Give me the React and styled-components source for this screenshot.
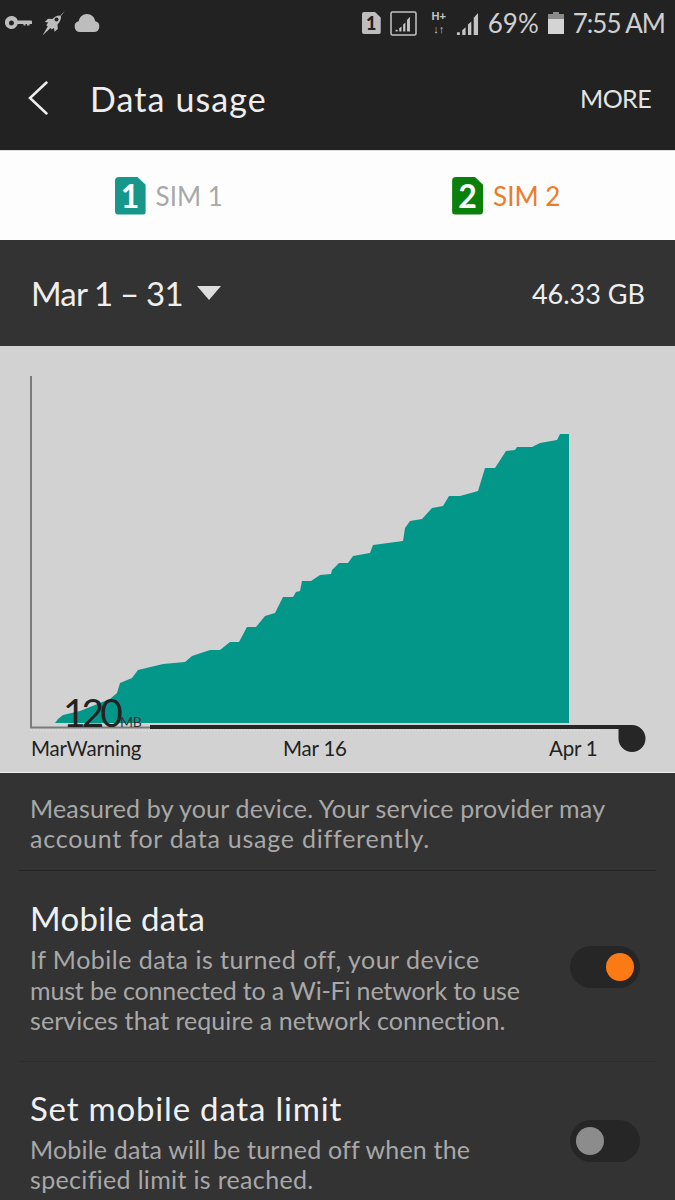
import React from "react";
import styled, { createGlobalStyle } from "styled-components";

const GlobalStyle = createGlobalStyle`
  html, body {
    margin: 0;
    background: #333;
  }
  * {
    box-sizing: border-box;
  }
`;

const Page = styled.div`
  width: 675px;
  height: 1200px;
  overflow: hidden;
  background: #333;
  font-family: Lato, "Open Sans", sans-serif;
`;

const TopBlock = styled.header`
  height: 151px;
  background: #222;
  border-bottom: 1px solid #ddd;
`;

const StatusBar = styled.div`
  height: 46px;
  display: flex;
  align-items: center;
  justify-content: space-between;
  padding: 0 10px 0 5px;
  color: #c4c4c4;
`;

const StatusGroup = styled.div`
  display: flex;
  align-items: center;
  gap: ${({ $gap }) => $gap}px;
`;

const StatusText = styled.span`
  font-size: 26px;
  letter-spacing: ${({ $spacing }) => $spacing || 0}px;
  color: #cfcfcf;
`;

const MiniSim = styled.div`
  width: 19px;
  height: 22px;
  display: flex;
  align-items: center;
  justify-content: center;
  background: #bdbdbd;
  color: #222;
  border-radius: 2px;
  font-size: 18px;
  font-weight: 900;
  clip-path: polygon(0 0, 70% 0, 100% 25%, 100% 100%, 0 100%);
`;

const NetType = styled.div`
  width: 16px;
  margin-left: 5px;
  display: flex;
  flex-direction: column;
  align-items: center;
  font-family: "Liberation Sans", sans-serif;
  font-size: 11px;
  font-weight: 700;
  line-height: 13px;
  color: #c4c4c4;
`;

const AppBar = styled.div`
  height: 104px;
  display: flex;
  align-items: center;
  padding: 0 24px 0 28px;
  color: #eee;
`;

const Title = styled.h1`
  margin: 0 0 0 42px;
  flex: 1;
  font-size: 34px;
  font-weight: 400;
  letter-spacing: 1.1px;
`;

const MoreButton = styled.span`
  font-size: 25px;
  letter-spacing: -0.6px;
  color: #e4e4e4;
`;

const SimTabs = styled.nav`
  height: 89px;
  display: grid;
  grid-template-columns: 1fr 1fr;
  background: #fdfdfd;
`;

const SimTab = styled.div`
  display: flex;
  align-items: center;
  justify-content: center;
  gap: 10px;
  font-size: 26px;
  color: ${({ $active }) => ($active ? "#ee7b28" : "#a9a9a9")};
`;

const SimBadge = styled.div`
  width: 31px;
  height: 38px;
  display: flex;
  align-items: center;
  justify-content: center;
  background: ${({ $color }) => $color};
  color: #fff;
  border-radius: 4px;
  font-size: 32px;
  font-weight: 700;
  clip-path: polygon(0 0, 72% 0, 100% 22%, 100% 100%, 0 100%);
`;

const Summary = styled.div`
  height: 106px;
  display: flex;
  align-items: center;
  justify-content: space-between;
  padding: 0 30px 0 31px;
  color: #eee;
`;

const PeriodPicker = styled.div`
  display: flex;
  align-items: center;
  gap: 14px;
  font-size: 33px;
  letter-spacing: -0.8px;
`;

const Caret = styled.span`
  width: 0;
  height: 0;
  border-left: 12px solid transparent;
  border-right: 12px solid transparent;
  border-top: 14px solid #ddd;
`;

const Total = styled.span`
  font-size: 27px;
`;

const ChartPanel = styled.section`
  position: relative;
  height: 427px;
  padding-top: 388px;
  background: #d2d2d2;
  border-bottom: 1px solid #eee;
`;

const ChartDrawing = styled.svg`
  position: absolute;
  top: 0;
  left: 0;
  display: block;
`;

const WarningValue = styled.div`
  position: absolute;
  left: 63px;
  top: 343px;
  display: flex;
  align-items: baseline;
  gap: 1px;
  color: #222;
  font-size: 39px;
  letter-spacing: -4px;
  line-height: 46px;
`;

const WarningUnit = styled.span`
  font-size: 14px;
  letter-spacing: 0;
  color: #333;
`;

const AxisLabels = styled.div`
  position: relative;
  display: grid;
  grid-template-columns: 252px 266px auto;
  padding-left: 31px;
  color: #222;
  font-size: 20.5px;
  letter-spacing: -0.2px;
  line-height: 28px;
`;

const Note = styled.div`
  padding: 20px 19px 17px 30px;
  color: #a8a8a8;
  font-size: 25px;
  line-height: 30px;
`;

const Line = styled.span`
  display: block;
  white-space: nowrap;
  letter-spacing: ${({ $spacing }) => $spacing || 0}px;
`;

const Divider = styled.hr`
  margin: 0 19px;
  border: 0;
  border-top: 1px ${({ $dotted }) => ($dotted ? "dotted" : "solid")} #262626;
`;

const SettingRow = styled.div`
  display: flex;
  align-items: center;
  justify-content: space-between;
  padding: ${({ $top }) => $top}px 35px 25px 30px;
`;

const SettingTitle = styled.div`
  color: #f0f0f0;
  font-size: 33px;
  line-height: 40px;
  letter-spacing: ${({ $spacing }) => $spacing}px;
`;

const SettingText = styled.div`
  margin-top: 6px;
  color: #a8a8a8;
  font-size: 25px;
  line-height: 30.5px;
`;

const Toggle = styled.div`
  width: 70px;
  height: 42px;
  flex: none;
  display: flex;
  align-items: center;
  justify-content: ${({ $on }) => ($on ? "flex-end" : "flex-start")};
  padding: 0 6px;
  background: #262626;
  border-radius: 21px;
`;

const Knob = styled.span`
  width: 28px;
  height: 28px;
  border-radius: 50%;
  background: ${({ $on }) => ($on ? "#fb7a13" : "#8c8c8c")};
`;

const usagePoints =
  "55,723 58,719 63,715 80,711 100,703 110,699 117,693 120,683 132,678 138,670 163,664 185,662 192,656 210,650 " +
  "220,650 230,642 239,642 247,627 256,627 265,616 275,613 283,597 293,597 296,592 300,591 302,581 311,581 320,575 " +
  "331,574 332,570 339,563 348,563 353,556 370,553 373,545 403,541 405,528 410,521 422,519 432,508 443,506 449,496 " +
  "460,496 478,491 485,468 495,468 506,451 515,450 517,447 532,447 540,443 557,440 560,434 569,434 569,723";

const KeyIcon = () => (
  <svg width="27" height="14" viewBox="0 0 27 14" fill="#bdbdbd">
    <path d="M6.5 0a6.5 6.5 0 0 1 6.2 4.5H26a1 1 0 0 1 1 1V8h-2.5V9.500H22V8h-1.500V9.500H18.500V8h-5.800A6.500 6.500 0 1 1 6.500 0Zm0 4.500a2.200 2.200 0 1 0 0 5 2.200 2.200 0 0 0 0-5Z" />
  </svg>
);

const RocketIcon = () => (
  <svg width="26" height="26" viewBox="0 0 26 26" fill="#bdbdbd">
    <path d="M25 0.500 20.800 5.200c.8 3.500-.8 7-3.300 9.300l.3 4.500-3.300 2.800-.5-3.800-2.300 1.500-1.200-1.600-8 7.600 5.300-9.300-1.600-1 2-2.700-3.400-.6 3.200-3.200 4.300.4c2.300-2.600 5.800-4.300 9.200-3.500Z" />
    <circle cx="16.500" cy="9.500" r="2" fill="#222" />
  </svg>
);

const CloudIcon = () => (
  <svg width="26" height="18" viewBox="0 0 26 18" fill="#bdbdbd">
    <path d="M6 18a5.500 5.500 0 0 1-1.300-10.800C5.500 3 8.800 0 13 0s7.500 3 8.300 7.200A5.500 5.500 0 0 1 20 18Z" />
  </svg>
);

const SignalBars = ({ size, color }) => (
  <svg width={size} height={size} viewBox="0 0 24 24" fill={color}>
    <path d="M1 24h3v-3H1ZM6.500 24h3.500v-8l-3.500 3ZM12.500 24H16V10l-3.500 3ZM18.500 24H23V1l-4.500 5Z" />
  </svg>
);

const SignalBox = () => (
  <svg width="27" height="25" viewBox="0 0 27 25" fill="none">
    <rect x="1" y="1" width="25" height="23" rx="1.500" stroke="#c4c4c4" strokeWidth="1.500" />
    <g transform="translate(5 5) scale(.65)">
      <path fill="#c4c4c4" d="M1 24h3v-3H1ZM6.500 24h3.500v-8l-3.500 3ZM12.500 24H16V10l-3.500 3ZM18.500 24H23V1l-4.500 5Z" />
    </g>
  </svg>
);

const BatteryIcon = () => (
  <svg width="16" height="22" viewBox="0 0 16 22">
    <path fill="#8a8a8a" d="M5 0h6v2h5v6H0V2h5Z" />
    <rect y="7" width="16" height="15" fill="#d4d4d4" />
  </svg>
);

const BackIcon = () => (
  <svg width="20" height="34" viewBox="0 0 20 34" fill="none" stroke="#eee" strokeWidth="2.500" strokeLinecap="round">
    <path d="M18.500 1.500 2 17l16.500 15.500" />
  </svg>
);

const UsageChart = () => (
  <ChartDrawing width="675" height="427" viewBox="0 346 675 427">
    <polygon points={usagePoints} fill="#03978a" />
    <path d="M31 376V727.500H150" fill="none" stroke="#7b7b7b" strokeWidth="2" />
    <path d="M31 730.500H600" stroke="#e8e8e8" strokeWidth="1" strokeDasharray="1 2" />
    <path d="M150 725H632A13.500 13.500 0 1 1 618.500 738.500V729H150Z" fill="#262626" />
  </ChartDrawing>
);

export default function App() {
  return (
    <Page>
      <GlobalStyle />
      <TopBlock>
        <StatusBar>
          <StatusGroup $gap={8}>
            <KeyIcon />
            <RocketIcon />
            <CloudIcon />
          </StatusGroup>
          <StatusGroup $gap={9}>
            <MiniSim>1</MiniSim>
            <SignalBox />
            <NetType>
              <span>H+</span>
              <span>↓↑</span>
            </NetType>
            <SignalBars size={23} color="#c4c4c4" />
            <StatusText>69%</StatusText>
            <BatteryIcon />
            <StatusText $spacing={-1}>7:55 AM</StatusText>
          </StatusGroup>
        </StatusBar>
        <AppBar>
          <BackIcon />
          <Title>Data usage</Title>
          <MoreButton>MORE</MoreButton>
        </AppBar>
      </TopBlock>

      <SimTabs>
        <SimTab>
          <SimBadge $color="#16978a">1</SimBadge>
          SIM 1
        </SimTab>
        <SimTab $active>
          <SimBadge $color="#0b7f0b">2</SimBadge>
          SIM 2
        </SimTab>
      </SimTabs>

      <Summary>
        <PeriodPicker>
          Mar 1 – 31
          <Caret />
        </PeriodPicker>
        <Total>46.33 GB</Total>
      </Summary>

      <ChartPanel>
        <UsageChart />
        <WarningValue>
          120
          <WarningUnit>MB</WarningUnit>
        </WarningValue>
        <AxisLabels>
          <span>MarWarning</span>
          <span>Mar 16</span>
          <span>Apr 1</span>
        </AxisLabels>
      </ChartPanel>

      <Note>
        <Line $spacing={0.16}>Measured by your device. Your service provider may</Line>
        <Line $spacing={0.77}>account for data usage differently.</Line>
      </Note>
      <Divider />

      <SettingRow $top={27}>
        <div>
          <SettingTitle $spacing={0.3}>Mobile data</SettingTitle>
          <SettingText>
            <Line $spacing={0.5}>If Mobile data is turned off, your device</Line>
            <Line $spacing={-0.16}>must be connected to a Wi-Fi network to use</Line>
            <Line $spacing={0.05}>services that require a network connection.</Line>
          </SettingText>
        </div>
        <Toggle $on>
          <Knob $on />
        </Toggle>
      </SettingRow>
      <Divider $dotted />

      <SettingRow $top={26}>
        <div>
          <SettingTitle $spacing={0.8}>Set mobile data limit</SettingTitle>
          <SettingText>
            <Line $spacing={0.18}>Mobile data will be turned off when the</Line>
            <Line $spacing={0.33}>specified limit is reached.</Line>
          </SettingText>
        </div>
        <Toggle>
          <Knob />
        </Toggle>
      </SettingRow>
    </Page>
  );
}
